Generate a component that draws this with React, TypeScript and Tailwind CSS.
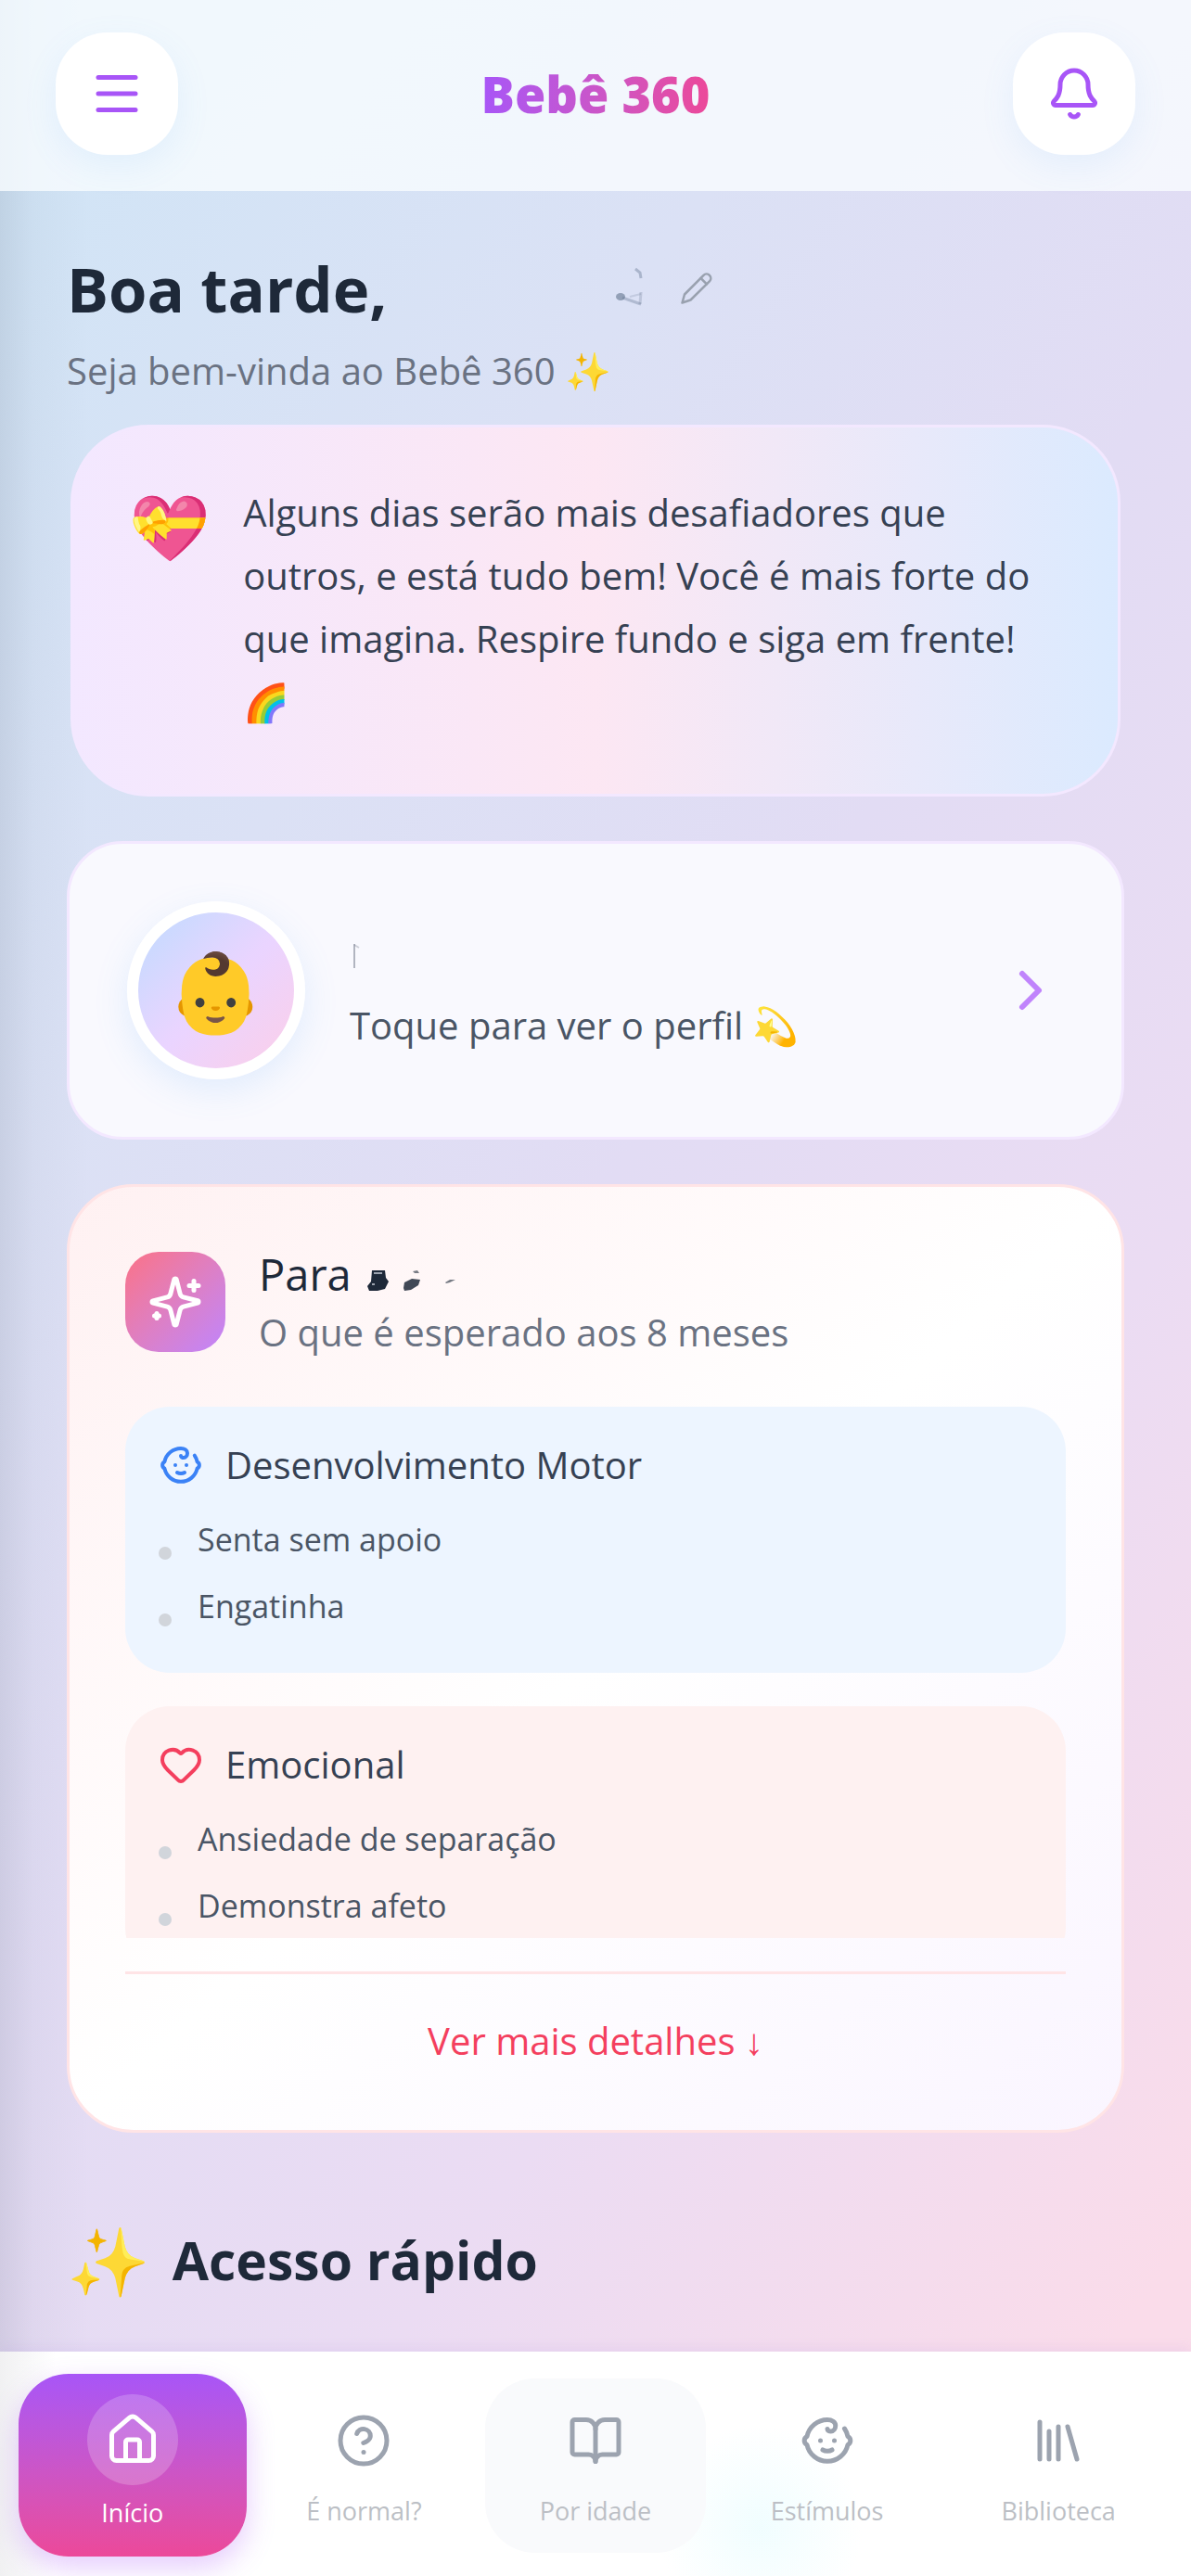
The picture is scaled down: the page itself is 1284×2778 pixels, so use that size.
import React from 'react';
import { Baby, Bell, BookOpen, ChevronRight, CircleHelp, Heart, House, Library, Menu } from 'lucide-react';

interface MilestoneGroup {
  title: string;
  icon: React.ReactNode;
  boxClass: string;
  items: string[];
}

interface NavItem {
  label: string;
  icon: React.ElementType;
  tileClass?: string;
}

const milestones: MilestoneGroup[] = [
  {
    title: 'Desenvolvimento Motor',
    icon: <Baby size={48} className="text-[#3b82f6]" />,
    boxClass: 'bg-[#edf5ff]',
    items: ['Senta sem apoio', 'Engatinha'],
  },
  {
    title: 'Emocional',
    icon: <Heart size={48} className="text-[#f43f5e]" />,
    boxClass: 'bg-[#fef1f1]',
    items: ['Ansiedade de separação', 'Demonstra afeto'],
  },
];

const navItems: NavItem[] = [
  { label: 'É normal?', icon: CircleHelp },
  { label: 'Por idade', icon: BookOpen, tileClass: 'bg-[#f9fafc]' },
  { label: 'Estímulos', icon: Baby },
  { label: 'Biblioteca', icon: Library },
];

function SparklesIcon() {
  return (
    <svg
      viewBox="0 0 24 24"
      className="size-[60px] text-white"
      fill="none"
      stroke="currentColor"
      strokeWidth="2"
      strokeLinecap="round"
      strokeLinejoin="round"
    >
      <path d="M9.937 15.5A2 2 0 0 0 8.5 14.063l-6.135-1.582a.5.5 0 0 1 0-.962L8.5 9.936A2 2 0 0 0 9.937 8.5l1.582-6.135a.5.5 0 0 1 .963 0L14.063 8.5A2 2 0 0 0 15.5 9.937l6.135 1.581a.5.5 0 0 1 0 .964L15.5 14.063a2 2 0 0 0-1.437 1.437l-1.582 6.135a.5.5 0 0 1-.963 0z" />
      <path d="M20 3v4" />
      <path d="M22 5h-4" />
      <path d="M4 17v2" />
      <path d="M5 18H3" />
    </svg>
  );
}

function PencilIcon() {
  return (
    <svg
      viewBox="0 0 36 36"
      className="size-9 text-gray-400"
      fill="none"
      stroke="currentColor"
      strokeWidth="2.5"
      strokeLinecap="round"
      strokeLinejoin="round"
    >
      <path d="M2.5 33.5L5 24.5L25.5 3.8a4.6 4.6 0 0 1 6.6 6.4L11.5 30.5Z" />
      <path d="M22.500 7l6.400 6.400" />
    </svg>
  );
}

// Names are hidden, only faint traces of them stay
function ErasedMotherName() {
  return (
    <svg viewBox="0 0 288 60" className="h-[60px] w-72 text-slate-500" fill="none" stroke="currentColor">
      <path d="M268 9l5 4 1 6" strokeWidth="3" opacity="0.4" />
      <ellipse cx="252" cy="39" rx="5" ry="4" fill="currentColor" stroke="none" opacity="0.6" />
      <path d="M254 40l20 7" strokeWidth="3" opacity="0.35" />
      <path d="M274 34l-1 13" strokeWidth="3" opacity="0.25" />
      <path d="M262 39l12-3" strokeWidth="2" opacity="0.2" />
    </svg>
  );
}

function ErasedBabyName() {
  return (
    <svg viewBox="0 0 100 24" className="h-6 w-[100px] text-gray-800" fill="currentColor">
      <path d="M6 2h14l1 8 3 4-4 8-8 2H3l-2-5 4-5z" />
      <path d="M8 5h9M6 17h3" stroke="#9ca3af" strokeWidth="2" />
      <path d="M40 21l1-6 8-4 9 1-2 6-8 5-7 1z" opacity="0.85" />
      <path d="M50 3l5-1 2 3h-5z" opacity="0.6" />
      <path d="M85 15l5-3 6 0-6 3-4 1z" opacity="0.6" />
    </svg>
  );
}

function Header() {
  return (
    <header className="flex h-[206px] items-center justify-between bg-[#f9fcff]/80 px-[60px] pb-1">
      <button
        aria-label="Menu"
        className="flex size-[132px] items-center justify-center rounded-[56px] bg-white text-[#a855f7] shadow-[0_12px_36px_rgba(96,165,250,0.1)]"
      >
        <Menu size={60} />
      </button>
      <h1 className="bg-gradient-to-r from-[#a855f7] to-[#ec4899] bg-clip-text text-[54px] leading-[72px] font-extrabold text-transparent">
        Bebê 360
      </h1>
      <button
        aria-label="Notificações"
        className="flex size-[132px] items-center justify-center rounded-[56px] bg-white text-[#a855f7] shadow-[0_12px_36px_rgba(96,165,250,0.1)]"
      >
        <Bell size={60} />
      </button>
    </header>
  );
}

function MilestoneBox({ group }: { group: MilestoneGroup }) {
  return (
    <section className={`rounded-[48px] px-9 pt-[33px] pb-[30px] ${group.boxClass}`}>
      <h3 className="flex items-center gap-6 text-[40px] leading-[60px] font-medium text-gray-700">
        {group.icon}
        {group.title}
      </h3>
      <ul className="mt-5 text-[34px] leading-[60px] text-gray-600">
        {group.items.map((item) => (
          <li key={item} className="flex items-center gap-7 pb-3">
            <span className="mt-[30px] size-3.5 rounded-full bg-[#d1d5db]" />
            {item}
          </li>
        ))}
      </ul>
    </section>
  );
}

function BottomNav() {
  return (
    <nav className="grid grid-cols-5 items-center gap-1 bg-white bg-[linear-gradient(90deg,rgba(70,70,90,0.08),transparent_60px),radial-gradient(circle_at_820px_190px,rgba(207,250,254,0.3),transparent_110px)] px-5 pt-6 pb-[21px] text-[27px] leading-9 shadow-[0_-4px_12px_rgba(168,130,220,0.12)]">
      <a
        href="#inicio"
        className="flex h-[197px] flex-col items-center rounded-[54px] bg-gradient-to-b from-[#a855f7] to-[#ec4899] pt-[22px] text-white shadow-[0_12px_30px_rgba(168,85,247,0.3)]"
      >
        <span className="flex size-[98px] items-center justify-center rounded-full bg-white/20">
          <House size={60} />
        </span>
        <span className="mt-3">Início</span>
      </a>
      {navItems.map(({ label, icon: Icon, tileClass }) => (
        <a
          key={label}
          href={`#${label}`}
          className={`mx-1 flex h-[188px] flex-col items-center rounded-[54px] pt-[37px] text-[#9ca3af] ${tileClass ?? ''}`}
        >
          <Icon size={60} />
          <span className="mt-7 text-[#bcbfc5]">{label}</span>
        </a>
      ))}
    </nav>
  );
}

export default function App() {
  return (
    <div className="flex min-h-screen flex-col bg-[linear-gradient(90deg,rgba(70,80,100,0.12),rgba(70,80,100,0.04)_36px,transparent_96px),linear-gradient(125deg,#cfe5f6,#dbe1f5_28%,#e2dcf4_48%,#ebdcf3_68%,#fadcea_92%)] font-['Open_Sans','Noto_Color_Emoji',sans-serif]">
      <Header />
      <main className="flex-1 px-[72px] pt-[60px]">
        <div className="flex items-center">
          <h2 className="text-[67px] leading-[90px] font-bold text-gray-800">Boa tarde,</h2>
          <ErasedMotherName />
          <button aria-label="Editar nome" className="ml-7">
            <PencilIcon />
          </button>
        </div>
        <p className="mt-3.5 text-[40px] leading-[60px] text-gray-500">Seja bem-vinda ao Bebê 360 ✨</p>

        <section className="mx-1 mt-7 flex gap-9 rounded-[84px] border-[3px] border-purple-100 bg-gradient-to-r from-purple-100 via-pink-100 to-blue-100 px-[60px] pt-[58px] pb-[65px]">
          <span className="text-[70px] leading-[96px]">💝</span>
          <p className="text-[40px] leading-[68px] text-gray-700">
            Alguns dias serão mais desafiadores que outros, e está tudo bem! Você é mais forte do que imagina. Respire
            fundo e siga em frente! 🌈
          </p>
        </section>

        <a
          href="#perfil"
          className="mt-12 flex items-center gap-12 rounded-[60px] border-[3px] border-purple-100 bg-[#f9f9fe] p-[62px]"
        >
          <span className="flex size-48 items-center justify-center rounded-full border-12 border-white bg-gradient-to-br from-blue-200 via-purple-200 to-pink-200 text-[84px] leading-[96px] shadow-[0_12px_36px_rgba(96,165,250,0.15)]">
            👶
          </span>
          <span className="flex-1">
            <svg viewBox="0 0 12 60" className="h-[60px] w-3 text-gray-500" fill="none" stroke="currentColor">
              <path d="M5 18v26" strokeWidth="2" opacity="0.5" />
              <path d="M5 19l5 3" strokeWidth="2" opacity="0.3" />
            </svg>
            <span className="mt-4 block text-[40px] leading-[60px] text-gray-600">Toque para ver o perfil 💫</span>
          </span>
          <ChevronRight size={72} className="text-[#c084fc]" />
        </a>

        <section className="mt-12 rounded-[72px] border-[3px] border-rose-100 bg-gradient-to-br from-rose-50 via-white to-purple-50 px-[60px] pt-[61px] pb-[60px]">
          <div className="flex items-center gap-9">
            <span className="flex size-27 items-center justify-center rounded-[36px] bg-gradient-to-br from-[#fb7185] to-[#c084fc]">
              <SparklesIcon />
            </span>
            <div>
              <h2 className="flex items-baseline gap-4 text-[47px] leading-[66px] font-medium text-gray-800">
                Para
                <ErasedBabyName />
              </h2>
              <p className="text-[40px] leading-[60px] text-gray-500">O que é esperado aos 8 meses</p>
            </div>
          </div>
          <div className="mt-[50px] flex max-h-[573px] flex-col gap-9 overflow-hidden">
            {milestones.map((group) => (
              <MilestoneBox key={group.title} group={group} />
            ))}
          </div>
          <div className="mt-9 border-t-[3px] border-rose-100 pt-9">
            <button className="w-full text-[40px] leading-[72px] font-medium text-[#f43f5e]">Ver mais detalhes ↓</button>
          </div>
        </section>

        <h2 className="mt-[92px] flex items-center gap-6 text-[57px] leading-[90px] font-bold text-gray-800">
          <span className="text-[72px]">✨</span>
          Acesso rápido
        </h2>
      </main>
      <BottomNav />
    </div>
  );
}
